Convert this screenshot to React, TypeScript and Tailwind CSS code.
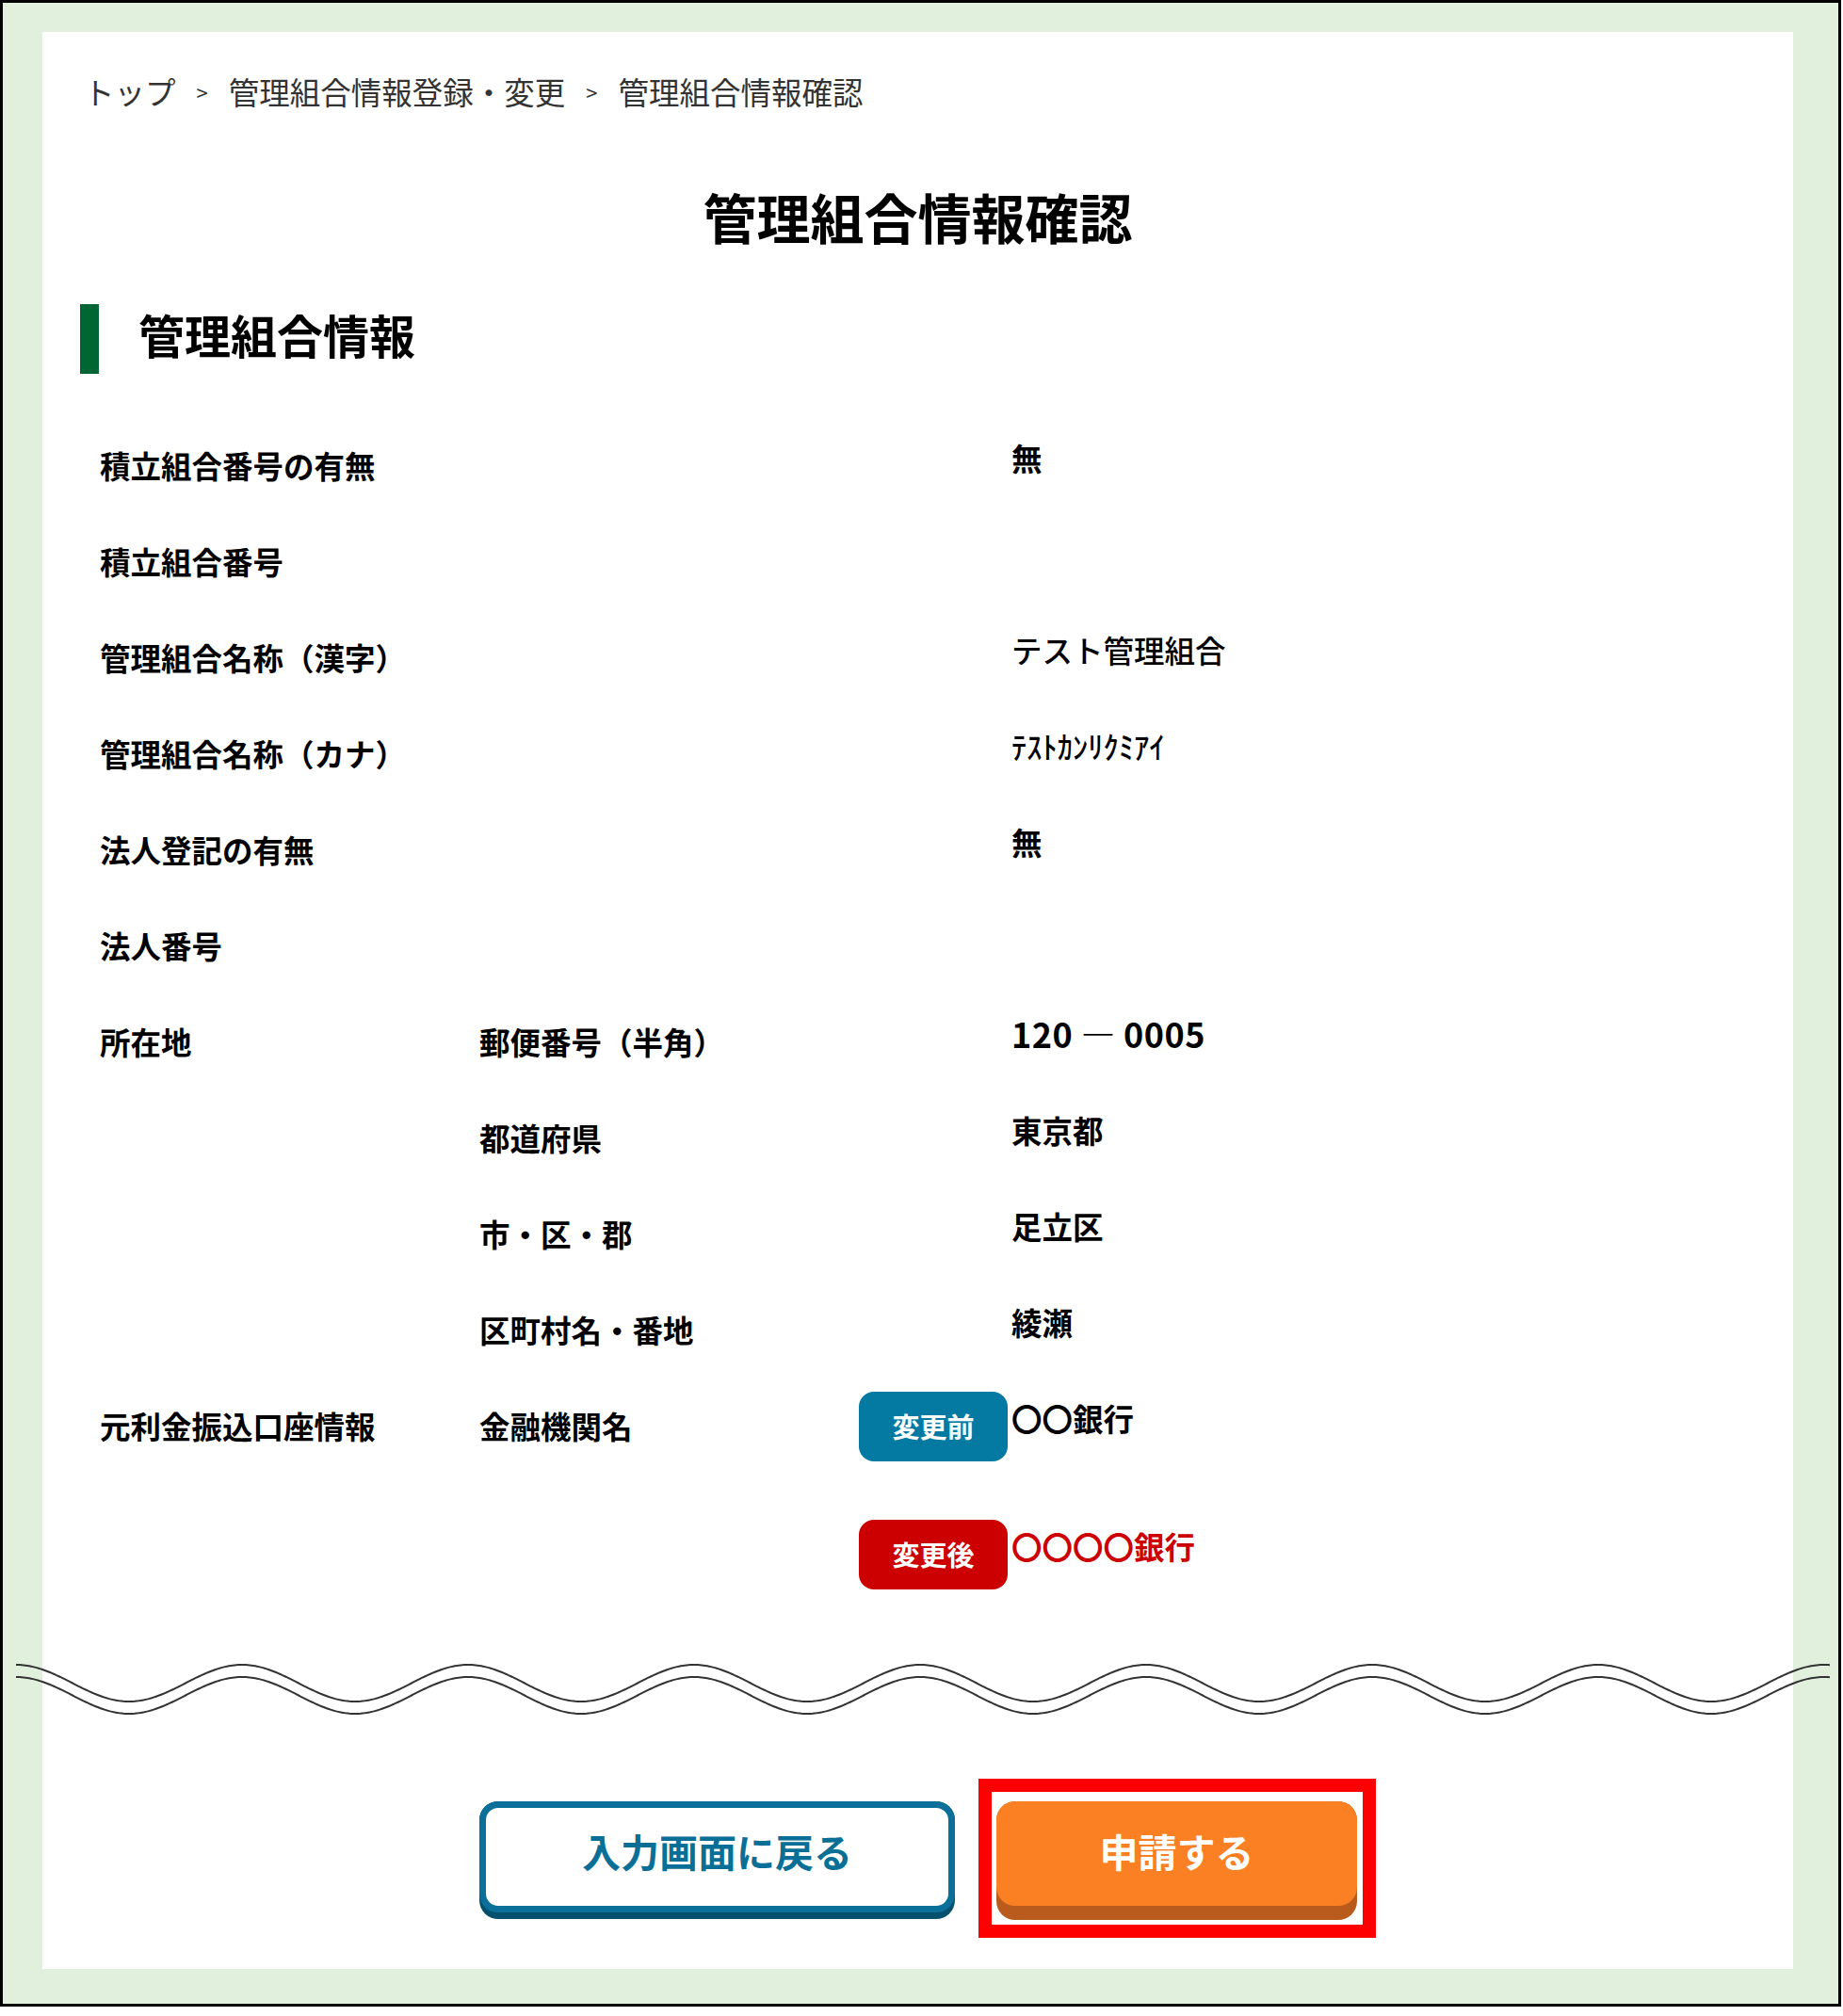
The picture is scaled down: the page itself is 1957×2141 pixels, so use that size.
import React from "react";

type Row = {
  label?: string;
  sub?: string;
  value?: React.ReactNode;
  badge?: "before" | "after";
};

const rows: Row[] = [
  { label: "積立組合番号の有無", value: <span className="font-bold">無</span> },
  { label: "積立組合番号" },
  { label: "管理組合名称（漢字）", value: <span className="font-medium">テスト管理組合</span> },
  { label: "管理組合名称（カナ）", value: <span className="font-medium">ﾃｽﾄｶﾝﾘｸﾐｱｲ</span> },
  { label: "法人登記の有無", value: <span className="font-bold">無</span> },
  { label: "法人番号" },
  {
    label: "所在地",
    sub: "郵便番号（半角）",
    value: <span className="text-[36px] font-bold tracking-[0.5px]">120 ― 0005</span>,
  },
  { sub: "都道府県", value: <span className="font-bold">東京都</span> },
  { sub: "市・区・郡", value: <span className="font-bold">足立区</span> },
  { sub: "区町村名・番地", value: <span className="font-bold">綾瀬</span> },
  {
    label: "元利金振込口座情報",
    sub: "金融機関名",
    badge: "before",
    value: <span className="font-bold">〇〇銀行</span>,
  },
];

function Badge({ kind }: { kind: "before" | "after" }) {
  return (
    <div
      className={
        kind === "before"
          ? "w-[158px] h-[74px] rounded-[16px] bg-[#0479a1] pb-[2px] text-white text-[29px] font-bold flex items-center justify-center"
          : "w-[158px] h-[74px] rounded-[16px] bg-[#cc0000] pb-[2px] text-white text-[29px] font-bold flex items-center justify-center"
      }
    >
      {kind === "before" ? "変更前" : "変更後"}
    </div>
  );
}

function InfoRow({ row, className = "" }: { row: Row; className?: string }) {
  return (
    <div
      className={
        "grid h-[102px] grid-cols-[403px_403px_162px_1fr] items-center pl-[61px] text-[32.5px] leading-[44px] text-black " +
        className
      }
    >
      <div className="font-bold pb-[2px]">{row.label}</div>
      <div className="font-bold pb-[2px]">{row.sub}</div>
      <div>{row.badge && <Badge kind={row.badge} />}</div>
      <div className="pb-[18px]">{row.value}</div>
    </div>
  );
}

function Wave() {
  const width = 1927;
  const period = 240;
  const amp = 19.5;
  const line = (mid: number) => {
    const pts: string[] = [];
    for (let x = 0; x <= width; x += 2) {
      const y = mid - amp * Math.cos((2 * Math.PI * x) / period);
      pts.push(`${x},${y.toFixed(2)}`);
    }
    return pts.join(" ");
  };
  return (
    <svg width={width} height={60} viewBox={`0 0 ${width} 60`} className="block">
      <polyline points={line(23.5)} fill="none" stroke="#333" strokeWidth={2} />
      <polyline points={line(36.5)} fill="none" stroke="#333" strokeWidth={2} />
    </svg>
  );
}

export default function App() {
  return (
    <div className="w-[1957px] h-[2141px] bg-white font-['Noto_Sans_CJK_JP',sans-serif]">
      <div className="w-[1955px] h-[2131px] border-[3px] border-black bg-[#e0f0dc] pt-[31px] pl-[42px] pr-[48px] pb-[37px]">
        <div className="w-[1859px] h-[2057px] bg-white pt-[41px]">
          {/* breadcrumb */}
          <div className="flex items-center pl-[44px] h-[44px] text-[32.5px] leading-[44px] text-[#333]">
            <span>トップ</span>
            <span className="mx-[22px] text-[22px]">&gt;</span>
            <span>管理組合情報登録・変更</span>
            <span className="mx-[22px] text-[22px]">&gt;</span>
            <span>管理組合情報確認</span>
          </div>

          <h1 className="mt-[74px] h-[78px] pb-[5px] text-center text-[57px] leading-[73px] font-bold text-black">
            管理組合情報確認
          </h1>

          <div className="mt-[52px] flex h-[74px] items-center pl-[40px]">
            <div className="h-[74px] w-[20px] bg-[#006633]" />
            <h2 className="ml-[42px] pb-[10px] text-[49px] leading-[64px] font-bold text-black">管理組合情報</h2>
          </div>

          <div className="mt-[47px]">
            {rows.map((r, i) => (
              <InfoRow key={i} row={r} />
            ))}
            <InfoRow
              className="mt-[34px]"
              row={{
                badge: "after",
                value: <span className="font-bold text-[#cc0000]">〇〇〇〇銀行</span>,
              }}
            />
          </div>

          <div className="mt-[62px] ml-[-28px]">
            <Wave />
          </div>

          <div className="mt-[65px] flex items-start gap-[25px] pl-[464px]">
            <div className="mt-[24px] h-[125px] w-[505px] rounded-[20px] bg-[#04506d] pb-[7px]">
              <div className="flex h-full items-center justify-center rounded-[20px] border-[7px] border-[#0a7099] bg-white pb-[12px] text-[41px] font-bold text-[#0a6f96]">
                入力画面に戻る
              </div>
            </div>
            <div className="h-[169px] w-[422px] border-[14px] border-[#ff0000] pt-[10px] pl-[5px]">
              <div className="h-[126px] w-[383px] rounded-[20px] bg-[#b85b1d] pb-[15px]">
                <div className="flex h-full items-center justify-center rounded-[20px] bg-[#fb8023] pb-[6px] text-[41px] font-bold text-white">
                  申請する
                </div>
              </div>
            </div>
          </div>
        </div>
      </div>
    </div>
  );
}
